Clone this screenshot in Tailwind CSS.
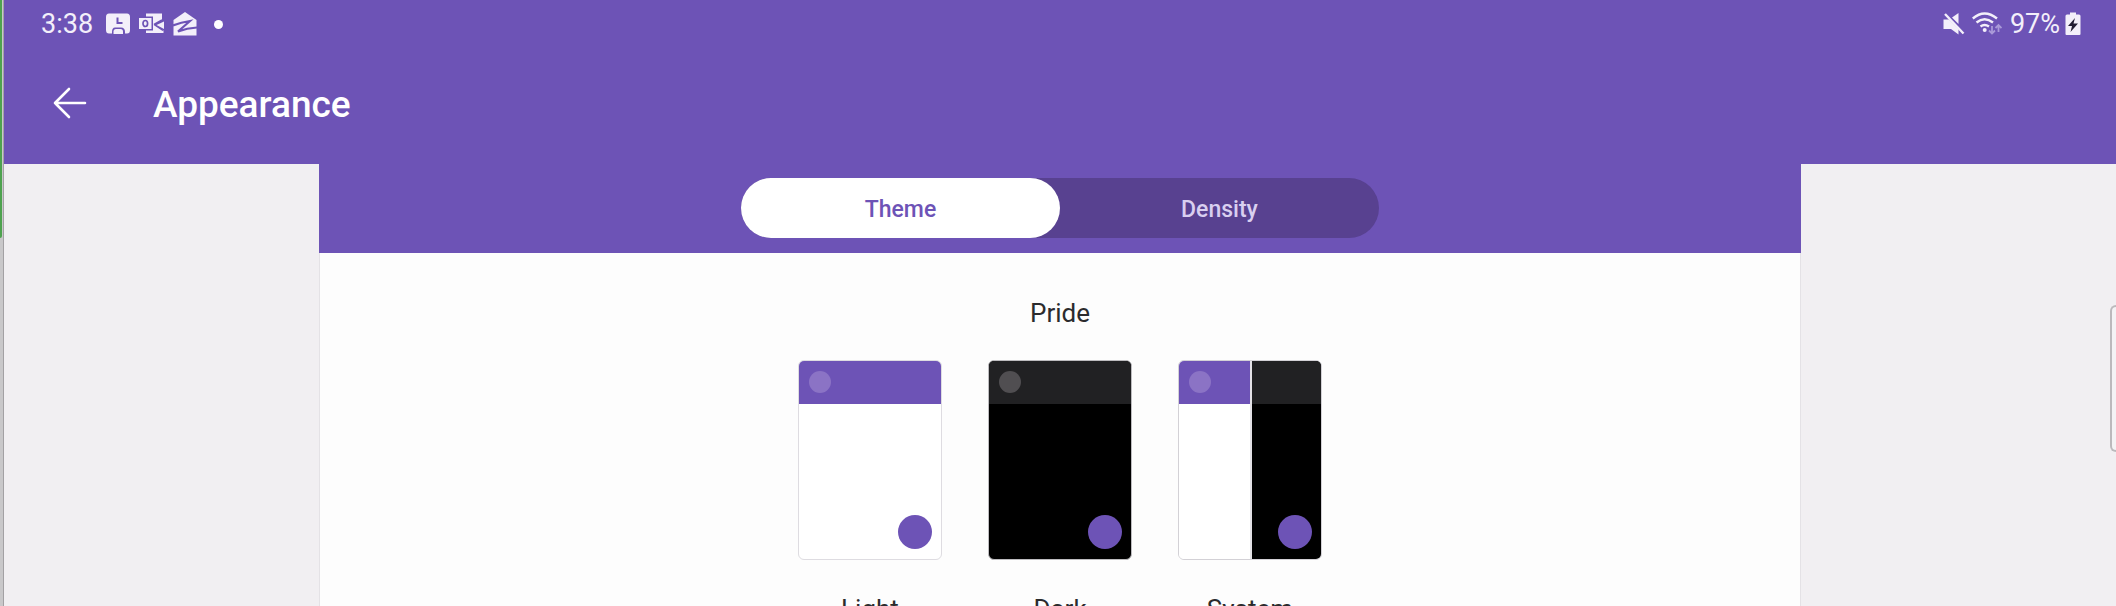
<!DOCTYPE html>
<html lang="en">
<head>
<meta charset="utf-8">
<meta name="viewport" content="width=device-width, initial-scale=1">
<title>Appearance</title>
<script src="https://cdn.jsdelivr.net/npm/@tailwindcss/browser@4"></script>
</head>
<body class="relative flex h-screen overflow-hidden bg-[#f1eff2] font-[Roboto,sans-serif] text-[#2b2b2d]">
  <!-- Edge of the window behind -->
  <div class="flex w-1 shrink-0 border-r border-[#a3a1a4] bg-[#c9c8ca]">
    <div class="h-[238px] w-[2px] rounded-br-sm bg-[#4ea24f]"></div>
  </div>

  <div class="flex min-w-0 flex-1 flex-col">
    <header class="h-[164px] shrink-0 bg-[#6d53b6] text-white">
      <div class="flex h-12 items-center justify-between pr-[35px] pl-[37px] text-[27px] text-[#f3effa]">
        <div class="flex items-center">
          <span class="w-16">3:38</span>
          <svg class="h-[22px] w-[26px]" viewBox="0 0 26 22" fill="currentColor" aria-hidden="true">
            <path d="M4 0.500H22Q25 0.500 25 4V17Q25 20.500 22 20.500H20V19Q20 14.500 16 14.500H10Q7 14.500 7 19V20.500H4Q1 20.500 1 17V4Q1 0.500 4 0.500Z"/>
            <path d="M8.500 21V18.500Q8.500 16 11 16H15.500Q18 16 18 18.500V21Z"/>
            <path d="M12.500 4.500V10H17.500" fill="none" stroke="#6d53b6" stroke-width="2"/>
          </svg>
          <svg class="ml-2 h-[22px] w-[26px]" viewBox="0 0 26 22" fill="currentColor" aria-hidden="true">
            <path d="M7 0.500H23V7L15 11.500L24.500 17.500V20H7Z"/>
            <path d="M15 11.500L23 7M15 11.500L24 17.500" stroke="#6d53b6" stroke-width="1.500"/>
            <path d="M25 8.500V16L17.500 12Z"/>
            <path d="M0 4.500H13V16.500H0Z" stroke="#6d53b6" stroke-width="2"/>
            <path d="M0 5H12.500V16H0Z"/>
            <ellipse cx="6.300" cy="10.500" rx="2.300" ry="3" fill="none" stroke="#6d53b6" stroke-width="1.700"/>
          </svg>
          <svg class="ml-2 h-6 w-6" viewBox="0 0 24 24" fill="currentColor" aria-hidden="true">
            <path d="M12 0L23.500 8V23.500H0.500V8Z"/>
            <path d="M0 13.500Q8 10.500 17 9L5 19.500Q14 16 24 15.500" fill="none" stroke="#6d53b6" stroke-width="2.200"/>
          </svg>
          <span class="ml-[17px] size-[9px] rounded-full bg-white"></span>
        </div>
        <div class="flex items-center">
          <svg class="h-[22px] w-[22px]" viewBox="0 0 22 22" fill="currentColor" aria-hidden="true">
            <path d="M0.500 6.500H6L15.500 16V21.500L8 16H0.500Z"/>
            <path d="M15.500 0V11L9 4.500Z"/>
            <path d="M2 1L20.500 20.500" stroke="currentColor" stroke-width="2.400"/>
          </svg>
          <svg class="ml-[7px] h-6 w-[30px]" viewBox="0 0 30 24" fill="none" stroke="currentColor" stroke-width="2.400" aria-hidden="true">
            <path d="M0.800 6.500Q12.500 -3.500 25 6.500M4.500 10.500Q12.500 4 21 10.500M8.500 14.500Q12.500 11.500 17 14.500"/>
            <circle cx="12.700" cy="18" r="2" fill="currentColor" stroke="none"/>
            <path stroke="#a999d8" stroke-width="1.800" d="M20 14V21.500M17 18.500L20 21.500L23 18.500M26.500 20V13M23.500 16L26.500 13L29.500 16"/>
          </svg>
          <span class="ml-2">97%</span>
          <svg class="ml-[5px] h-6 w-4" viewBox="0 0 16 24" fill="currentColor" aria-hidden="true">
            <path d="M5 0.500H11V2.500H14Q15.500 2.500 15.500 4V22Q15.500 23 14.500 23H1.500Q0.500 23 0.500 22V4Q0.500 2.500 2 2.500H5Z"/>
            <path fill="#221d33" d="M10 6L3 14H7L5.500 20L13 11.500H8.500Z"/>
          </svg>
        </div>
      </div>
      <div class="flex h-[114px] items-center pl-12">
        <button type="button" aria-label="Back" class="flex h-10 w-[101px] items-center pb-1">
          <svg class="h-8 w-9" viewBox="0 0 36 32" fill="none" stroke="currentColor" stroke-width="2.600" stroke-linecap="round" stroke-linejoin="round" aria-hidden="true">
            <path d="M21 2L7 16L21 30M7 16H37" transform="translate(-4 0)"/>
          </svg>
        </button>
        <h1 class="text-[37px] font-medium">Appearance</h1>
      </div>
    </header>

    <main class="mx-auto flex min-h-0 w-full max-w-[1482px] flex-1 flex-col">
      <div class="flex h-[89px] shrink-0 justify-center bg-[#6d53b6] pt-[14px]">
        <div role="tablist" class="flex h-[60px] w-[638px] rounded-full bg-[#584190] text-[23px] font-medium">
          <button type="button" role="tab" aria-selected="true" class="flex-1 rounded-full bg-white pt-1 text-[#6d53b6]">Theme</button>
          <button type="button" role="tab" aria-selected="false" class="flex-1 pt-1 text-[#d9cff0]">Density</button>
        </div>
      </div>

      <section class="flex flex-1 flex-col items-center border-x border-[#e4e2e6] bg-[#fdfdfd] pt-10 text-[26px]">
        <h2 class="leading-10">Pride</h2>
        <div class="mt-[27px] flex gap-[46px]">
          <button type="button" class="flex w-36 flex-col items-center">
            <span class="flex h-[200px] w-full flex-col justify-between overflow-hidden rounded-md border border-[#dedce1] bg-white">
              <span class="flex h-[43px] items-center bg-[#6d53b6] pb-[2px] pl-[10px]"><span class="size-[22px] rounded-full bg-[#8b73c5]"></span></span>
              <span class="mr-[9px] mb-[10px] size-[34px] self-end rounded-full bg-[#6d53b6]"></span>
            </span>
            <span class="mt-[29px] leading-10">Light</span>
          </button>
          <button type="button" class="flex w-36 flex-col items-center">
            <span class="flex h-[200px] w-full flex-col justify-between overflow-hidden rounded-md border border-[#bdbcbf] bg-black">
              <span class="flex h-[43px] items-center bg-[#212123] pb-[2px] pl-[10px]"><span class="size-[22px] rounded-full bg-[#504e51]"></span></span>
              <span class="mr-[9px] mb-[10px] size-[34px] self-end rounded-full bg-[#6d53b6]"></span>
            </span>
            <span class="mt-[29px] leading-10">Dark</span>
          </button>
          <button type="button" class="flex w-36 flex-col items-center">
            <span class="flex h-[200px] w-full overflow-hidden rounded-md border border-[#d3d1d6]">
              <span class="flex flex-1 flex-col border-r-2 border-[#e3e1e6] bg-white">
                <span class="flex h-[43px] items-center bg-[#6d53b6] pb-[2px] pl-[10px]"><span class="size-[22px] rounded-full bg-[#8b73c5]"></span></span>
              </span>
              <span class="flex w-[69px] flex-col justify-between bg-black">
                <span class="h-[43px] bg-[#212123]"></span>
                <span class="mr-[9px] mb-[10px] size-[34px] self-end rounded-full bg-[#6d53b6]"></span>
              </span>
            </span>
            <span class="mt-[29px] leading-10">System</span>
          </button>
        </div>
      </section>
    </main>
  </div>

  <!-- Edge panel handle -->
  <div class="absolute top-[305px] right-0 h-[147px] w-[6px] rounded-l-lg border-2 border-r-0 border-[#bbb9bc] bg-[#f4f3f5]"></div>
</body>
</html>
